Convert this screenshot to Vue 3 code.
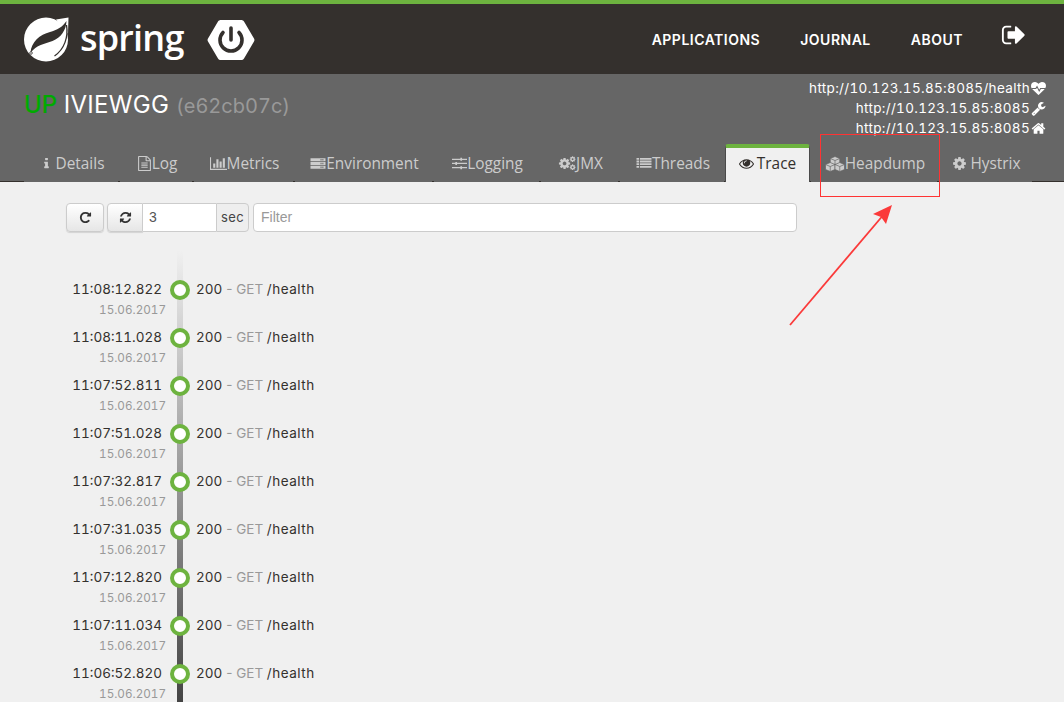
<script setup>
const icons = {
  info: { box: '0 0 1792 1792', d: 'M1216 1344v128q0 26-19 45t-45 19h-512q-26 0-45-19t-19-45v-128q0-26 19-45t45-19h64v-384h-64q-26 0-45-19t-19-45v-128q0-26 19-45t45-19h384q26 0 45 19t19 45v576h64q26 0 45 19t19 45zm-128-1152v192q0 26-19 45t-45 19h-256q-26 0-45-19t-19-45v-192q0-26 19-45t45-19h256q26 0 45 19t19 45z' },
  file: { box: '0 0 1792 1792', d: 'M1596 380q28 28 48 76t20 88v1152q0 40-28 68t-68 28h-1344q-40 0-68-28t-28-68v-1600q0-40 28-68t68-28h896q40 0 88 20t76 48zm-444-244v376h376q-10-29-22-41l-313-313q-12-12-41-22zm384 1528v-1024h-416q-40 0-68-28t-28-68v-416h-768v1536h1280zm-1024-864q0-14 9-23t23-9h704q14 0 23 9t9 23v64q0 14-9 23t-23 9h-704q-14 0-23-9t-9-23v-64zm736 224q14 0 23 9t9 23v64q0 14-9 23t-23 9h-704q-14 0-23-9t-9-23v-64q0-14 9-23t23-9h704zm0 256q14 0 23 9t9 23v64q0 14-9 23t-23 9h-704q-14 0-23-9t-9-23v-64q0-14 9-23t23-9h704z' },
  chart: { box: '0 0 2048 1792', d: 'M640 896v512h-256v-512h256zm384-512v1024h-256v-1024h256zm1024 1152v128h-2048v-1536h128v1408h1920zm-640-896v768h-256v-768h256zm384-384v1152h-256v-1152h256z' },
  server: { box: '0 0 1792 1792', d: 'M0 256h1792v368h-1792zM0 712h1792v368h-1792zM0 1168h1792v368h-1792zM1200 350v180h120v-180zM1420 350v180h120v-180zM1200 806v180h120v-180zM1420 806v180h120v-180zM1200 1262v180h120v-180zM1420 1262v180h120v-180z' },
  sliders: { box: '0 0 1792 1792', d: 'M0 320h1000v-110h200v110h592v150h-592v110h-200v-110h-1000zM0 820h400v-110h200v110h1192v150h-1192v110h-200v-110h-400zM0 1320h1000v-110h200v110h592v150h-592v110h-200v-110h-1000z' },
  list: { box: '0 0 1792 1792', d: 'M0 224h300v220h-300zM400 224h1392v220h-1392zM0 544h300v220h-300zM400 544h1392v220h-1392zM0 864h300v220h-300zM400 864h1392v220h-1392zM0 1184h300v220h-300zM400 1184h1392v220h-1392z' },
  eye: { box: '0 0 1792 1792', d: 'M1664 960q-152-236-381-353 61 104 61 225 0 185-131.5 316.5t-316.5 131.5-316.5-131.5-131.5-316.5q0-121 61-225-229 117-381 353 133 205 333.5 326.5t434.5 121.5 434.5-121.5 333.5-326.5zm-720-384q0-20-14-34t-34-14q-125 0-214.5 89.5t-89.5 214.5q0 20 14 34t34 14 34-14 14-34q0-86 61-147t147-61q20 0 34-14t14-34zm848 384q0 34-20 69-140 230-376.5 368.5t-499.5 138.5-499.5-139-376.5-368q-20-35-20-69t20-69q140-229 376.5-368t499.5-139 499.5 139 376.5 368q20 35 20 69z' },
  cog: { box: '0 0 1792 1792', d: 'M1152 896q0-106-75-181t-181-75-181 75-75 181 75 181 181 75 181-75 75-181zm512-109v222q0 12-8 23t-20 13l-185 28q-19 54-39 91 35 50 107 138 10 12 10 25t-9 23q-27 37-99 108t-94 71q-12 0-26-9l-138-108q-44 23-91 38-16 136-29 186-7 28-36 28h-222q-14 0-24.5-8.5t-11.5-21.5l-28-184q-49-16-90-37l-141 107q-10 9-25 9-14 0-25-11-126-114-165-168-7-10-7-23 0-12 8-23 15-21 51-66.5t54-70.5q-27-50-41-99l-183-27q-13-2-21-12.5t-8-23.5v-222q0-12 8-23t19-13l186-28q14-46 39-92-40-57-107-138-10-12-10-24 0-10 9-23 26-36 98.5-107.5t94.5-71.5q13 0 26 10l138 107q44-23 91-38 16-136 29-186 7-28 36-28h222q14 0 24.5 8.5t11.5 21.5l28 184q49 16 90 37l142-107q9-9 24-9 13 0 25 10 129 119 165 170 7 8 7 22 0 12-8 23-15 21-51 66.5t-54 70.5q26 50 41 98l183 28q13 2 21 12.5t8 23.5z' },
  refresh: { box: '0 0 1792 1792', d: 'M1639 1056q0 5-1 7-64 268-268 434.5t-478 166.5q-146 0-282.5-55t-243.5-157l-129 129q-19 19-45 19t-45-19-19-45v-448q0-26 19-45t45-19h448q26 0 45 19t19 45-19 45l-137 137q71 66 161 102t187 36q134 0 250-65t186-179q11-17 53-117 8-23 30-23h192q13 0 22.5 9.5t9.5 22.5zm25-800v448q0 26-19 45t-45 19h-448q-26 0-45-19t-19-45 19-45l138-138q-148-137-349-137-134 0-250 65t-186 179q-11 17-53 117-8 23-30 23h-199q-13 0-22.5-9.5t-9.5-22.5v-7q65-268 270-434.5t480-166.5q146 0 284 55.5t245 156.5l130-129q19-19 45-19t45 19 19 45z' },
  repeat: { box: '0 0 1792 1792', d: 'M1664 256v448q0 26-19 45t-45 19h-448q-42 0-59-40-17-39 14-69l138-138q-148-137-349-137-104 0-198.5 40.5t-163.5 109.5-109.5 163.5-40.5 198.5 40.5 198.5 109.5 163.5 163.5 109.5 198.5 40.5q119 0 225-52t179-147q7-10 23-12 15 0 25 9l137 138q9 8 9.5 20.5t-7.5 22.5q-109 132-264 204.5t-327 72.5q-156 0-298-61t-245-164-164-245-61-298 61-298 164-245 245-164 298-61q147 0 284.5 55.5t244.5 156.5l130-129q29-31 70-14 39 17 39 59z' },
  home: { box: '0 0 1792 1792', d: 'M1472 992v480q0 26-19 45t-45 19h-384v-384h-256v384h-384q-26 0-45-19t-19-45v-480q0-1 .5-3t.5-3l575-474 575 474q1 2 1 6zm223-69l-62 74q-8 9-21 11h-3q-13 0-21-7l-692-577-692 577q-12 8-24 7-13-2-21-11l-62-74q-8-10-7-23.5t11-21.5l719-599q32-26 76-26t76 26l244 204v-195q0-14 9-23t23-9h192q14 0 23 9t9 23v408l219 182q10 8 11 21.5t-7 23.5z' },
  wrench: { box: '0 0 1792 1792', d: 'M448 1472q0-26-19-45t-45-19-45 19-19 45 19 45 45 19 45-19 19-45zm644-420l-682 682q-37 37-90 37-52 0-91-37l-106-108q-38-36-38-90 0-53 38-91l681-681q39 98 114.5 173.5t173.5 114.5zm634-435q0 39-23 106-47 134-164.5 217.5t-258.5 83.5q-185 0-316.5-131.5t-131.5-316.5 131.5-316.5 316.5-131.5q58 0 121.5 16.5t107.5 46.5q16 11 16 28t-16 28l-293 169v224l193 107q5-3 79-48.5t135.5-81 70.5-35.5q15 0 23.5 10t8.5 25z' },
  signout: { box: '0 0 1792 1792', d: 'M704 1440q0 4 1 20t.5 26.5-3 23.5-10 19.5-20.5 6.5h-320q-119 0-203.5-84.5t-84.5-203.5v-704q0-119 84.5-203.5t203.5-84.5h320q13 0 22.5 9.5t9.5 22.5q0 4 1 20t.5 26.5-3 23.5-10 19.5-20.5 6.5h-320q-66 0-113 47t-47 113v704q0 66 47 113t113 47h312l11.5 1 11.5 3 8 5.5 7 9 2 13.5zm928-544q0 26-19 45l-544 544q-19 19-45 19t-45-19-19-45v-288h-448q-26 0-45-19t-19-45v-384q0-26 19-45t45-19h448v-288q0-26 19-45t45-19 45 19l544 544q19 19 19 45z' },
  heart: { box: '0 0 1792 1792', d: 'M896 1664q-26 0-44-18l-624-602q-10-8-27.5-26t-55.5-65.5-68-97.5-53.5-121-23.5-138q0-220 127-344t351-124q62 0 126.5 21.5t120 58 95.5 68.5 76 68q36-36 76-68t95.5-68.5 120-58 126.5-21.5q224 0 351 124t127 344q0 221-229 450l-623 600q-18 18-44 18z' },
}

const tabs = [
  { label: 'Details', icon: 'info', width: 94, spaced: true },
  { label: 'Log', icon: 'file', width: 72 },
  { label: 'Metrics', icon: 'chart', width: 99 },
  { label: 'Environment', icon: 'server', width: 137 },
  { label: 'Logging', icon: 'sliders', width: 105 },
  { label: 'JMX', icon: 'cogs', width: 77 },
  { label: 'Threads', icon: 'list', width: 104 },
  { label: 'Trace', icon: 'eye', width: 85, active: true, spaced: true },
  { label: 'Heapdump', icon: 'cubes', width: 126 },
  { label: 'Hystrix', icon: 'cog', width: 93, spaced: true },
]

const urls = [
  { text: 'http://10.123.15.85:8085/health', icon: 'heart' },
  { text: 'http://10.123.15.85:8085', icon: 'wrench' },
  { text: 'http://10.123.15.85:8085', icon: 'home' },
]

const traces = [
  '11:08:12.822',
  '11:08:11.028',
  '11:07:52.811',
  '11:07:51.028',
  '11:07:32.817',
  '11:07:31.035',
  '11:07:12.820',
  '11:07:11.034',
  '11:06:52.820',
]
</script>

<template>
  <div class="page">
    <nav class="navbar">
      <div class="brand">
        <svg class="leaf" viewBox="24 17 47 45">
          <circle cx="46" cy="39.500" r="22" fill="#fff" />
          <path fill="#fff" d="M56 19.500L68.500 17.500 68 34z" />
          <path fill="#34302d" d="M30.500 53C31 42 40 34.500 50 32c7-1.800 12.500-5 16.500-11 -.5 9.500-5.500 16.500-14 20-8 3.200-16 3.500-22 12z" />
          <path fill="none" stroke="#34302d" stroke-width="1.300" d="M66.500 25c2 12-2 24-12 31" />
          <circle cx="31" cy="53" r="1.300" fill="#fff" stroke="#34302d" stroke-width="0.800" />
        </svg>
        <span class="wordmark">spring</span>
        <svg class="hex" viewBox="0 0 48 42">
          <path fill="#fff" d="M11 2.500c.7-1 1.600-1.500 3-1.500h20c1.400 0 2.300.5 3 1.500l10 17c.6 1 .6 2 0 3l-10 17c-.7 1-1.600 1.500-3 1.500h-20c-1.400 0-2.300-.5-3-1.500l-10-17c-.6-1-.6-2 0-3z" />
          <path fill="none" stroke="#34302d" stroke-width="3.600" stroke-linecap="round" d="M16 13.500a11 11 0 1 0 16 0" />
          <path fill="none" stroke="#34302d" stroke-width="3.600" stroke-linecap="round" d="M24 9v12" />
        </svg>
      </div>
      <ul class="nav-links">
        <li>APPLICATIONS</li>
        <li>JOURNAL</li>
        <li>ABOUT</li>
        <li class="signout">
          <svg viewBox="0 0 1792 1792"><path fill="#fff" :d="icons.signout.d" /></svg>
        </li>
      </ul>
    </nav>

    <header class="app-header">
      <div class="summary">
        <h1 class="title"><span class="status">UP</span> IVIEWGG <small>(e62cb07c)</small></h1>
        <ul class="urls">
          <li v-for="url in urls" :key="url.icon">
            <span>{{ url.text }}</span>
            <span class="url-icon">
              <svg :viewBox="icons[url.icon].box"><path fill="#fff" :d="icons[url.icon].d" /></svg>
              <svg v-if="url.icon === 'heart'" class="pulse" viewBox="0 0 1792 1792">
                <path fill="none" stroke="#666" stroke-width="130" d="M60 900h520l140-240 260 520 160-280h620" />
              </svg>
            </span>
          </li>
        </ul>
      </div>
      <ul class="tabs">
        <li
          v-for="tab in tabs"
          :key="tab.label"
          class="tab"
          :class="{ active: tab.active, spaced: tab.spaced }"
          :style="{ width: tab.width + 'px' }"
        >
          <svg v-if="tab.icon === 'cogs'" class="tab-icon cogs" viewBox="0 0 1920 1536">
            <g fill="currentColor">
              <path :d="icons.cog.d" transform="translate(0 101) scale(.78)" />
              <path :d="icons.cog.d" transform="translate(1202 -18) scale(.4)" />
              <path :d="icons.cog.d" transform="translate(1202 842) scale(.4)" />
            </g>
          </svg>
          <svg v-else-if="tab.icon === 'cubes'" class="tab-icon cubes" viewBox="0 0 40 32">
            <g fill="currentColor" stroke="#666" stroke-width="1.400" stroke-linejoin="round">
              <path d="M20 1l9.500 4v9.500l-9.500 4-9.500-4V5z" />
              <path d="M10.500 13l9.500 4v10l-9.500 4L1 27V17z" />
              <path d="M29.500 13l9.500 4v10l-9.500 4-9.500-4V17z" />
              <path fill="none" d="M10.500 5l9.500 4 9.500-4M20 9v9M1 17l9.500 4 9.500-4M10.500 21v10M20 17l9.500 4 9.500-4M29.500 21v10" />
            </g>
          </svg>
          <svg v-else class="tab-icon" :class="tab.icon" :viewBox="icons[tab.icon].box">
            <path fill="currentColor" :d="icons[tab.icon].d" />
          </svg>
          <span>{{ tab.label }}</span>
        </li>
      </ul>
    </header>

    <main class="content">
      <div class="toolbar">
        <button class="btn single">
          <svg viewBox="0 0 1792 1792"><path fill="#333" :d="icons.repeat.d" /></svg>
        </button>
        <div class="interval">
          <button class="btn joined">
            <svg viewBox="0 0 1792 1792"><path fill="#333" :d="icons.refresh.d" /></svg>
          </button>
          <input class="seconds" type="text" value="3" />
          <span class="addon">sec</span>
        </div>
        <input class="filter" type="text" placeholder="Filter" />
      </div>

      <ol class="timeline">
        <li v-for="time in traces" :key="time" class="trace">
          <div class="when">
            <div class="time">{{ time }}</div>
            <div class="date">15.06.2017</div>
          </div>
          <span class="dot"></span>
          <div class="what">200 <span class="muted">- GET</span> <span class="path">/health</span></div>
        </li>
      </ol>
    </main>

    <div class="mark-box"></div>
    <svg class="mark-arrow" viewBox="0 0 120 130">
      <path d="M2 128L97 16" stroke="#fb3a3a" stroke-width="1.800" fill="none" />
      <path d="M104 8L98 27 93 20 85 17z" fill="#fb3a3a" />
    </svg>
  </div>
</template>

<style>
html,
body {
  margin: 0;
  height: 100%;
  overflow: hidden;
  background: #f0f0f0;
}
</style>

<style scoped>
.page {
  position: relative;
  height: 702px;
  overflow: hidden;
  background: #f0f0f0;
  font-family: Inter, "Open Sans", sans-serif;
  font-variant-numeric: tabular-nums;
  color: #34302d;
}

ul,
ol {
  list-style: none;
  margin: 0;
  padding: 0;
}

.navbar {
  box-sizing: border-box;
  height: 74px;
  border-top: 4px solid #6db33f;
  background: #34302d;
  display: flex;
  justify-content: space-between;
  padding-left: 24px;
}

.brand {
  display: flex;
  align-items: center;
}

.leaf {
  width: 47px;
  height: 45px;
  margin-right: 9px;
  margin-top: 1px;
}

.wordmark {
  font-family: "Open Sans", sans-serif;
  font-size: 36px;
  font-weight: 600;
  line-height: 40px;
  color: #fff;
  width: 127px;
  margin-top: -3px;
  letter-spacing: -0.8px;
}

.hex {
  width: 48px;
  height: 42px;
  margin-top: 1px;
}

.nav-links {
  display: flex;
  align-items: center;
  color: #fff;
  font-size: 14px;
  font-weight: 600;
  letter-spacing: 0.5px;
  margin-right: 37px;
  gap: 40px;
}

.signout {
  display: flex;
  margin-top: -8px;
  margin-left: -2px;
}

.signout svg {
  width: 26px;
  height: 26px;
}

.app-header {
  height: 108px;
  background: #666;
  display: flex;
  flex-direction: column;
  justify-content: space-between;
}

.summary {
  display: flex;
  justify-content: space-between;
  padding: 4px 17px 0 24px;
}

.title {
  margin: 14px 0 0;
  font-size: 24px;
  line-height: 26px;
  font-weight: 400;
  color: #fff;
  letter-spacing: 0.3px;
}

.status {
  color: #00aa00;
  font-weight: 500;
  letter-spacing: -0.1px;
}

.title small {
  font-size: 20px;
  letter-spacing: 0;
  color: #999;
}

.urls {
  color: #fff;
  font-size: 13.5px;
  letter-spacing: 0.33px;
}

.urls li {
  display: flex;
  justify-content: flex-end;
  align-items: center;
  height: 20px;
}

.url-icon {
  position: relative;
  width: 17px;
  height: 15px;
  display: flex;
}

.url-icon svg {
  width: 15px;
  height: 15px;
  margin-left: 1px;
}

.pulse {
  position: absolute;
  left: 0;
  top: 0;
}

.tabs {
  display: flex;
  padding-left: 24px;
  height: 37px;
  border-bottom: 1px solid #34302d;
}

.tab {
  box-sizing: border-box;
  height: 38px;
  margin-right: 2px;
  padding: 0 0 3px 2px;
  background: #666;
  color: #ccc;
  font-family: "Open Sans", sans-serif;
  font-size: 15.4px;
  display: flex;
  align-items: center;
  justify-content: center;
  border-top: 4px solid transparent;
  flex: none;
}

.tab.active {
  background: #f0f0f0;
  color: #34302d;
  border-top-color: #6db33f;
  border-left: 1px solid #4a4a4a;
  border-right: 1px solid #4a4a4a;
  border-radius: 3px 3px 0 0;
  margin-right: 1px;
  margin-left: -1px;
  padding-left: 0;
}

.tab-icon {
  width: 15px;
  height: 15px;
  flex: none;
}

.tab-icon.chart {
  width: 17px;
}

.tab-icon.server,
.tab-icon.list {
  width: 16px;
  height: 15px;
}

.tab-icon.cogs {
  width: 18px;
  height: 14.400px;
}

.tab-icon.cubes {
  width: 20px;
  height: 16px;
}

.tab.spaced .tab-icon {
  margin-right: 3px;
}

.tab .tab-icon.info {
  width: 13px;
  margin-right: 3px;
}

.content {
  padding: 21px 0 0 66px;
}

.toolbar {
  display: flex;
  width: 731px;
  height: 29px;
}

.btn {
  box-sizing: border-box;
  height: 29px;
  padding: 0;
  border: 1px solid #ccc;
  background: linear-gradient(#fff, #e6e6e6);
  display: flex;
  align-items: center;
  justify-content: center;
}

.btn svg {
  width: 13px;
  height: 13px;
}

.single {
  width: 38px;
  border-radius: 4px;
  margin-right: 3px;
  box-shadow: 0 1px 1px rgba(0, 0, 0, 0.12);
}

.interval {
  display: flex;
  margin-right: 4px;
}

.joined {
  width: 36px;
  border-radius: 4px 0 0 4px;
  box-shadow: 0 1px 1px rgba(0, 0, 0, 0.12);
}

input {
  box-sizing: border-box;
  height: 29px;
  margin: 0;
  padding: 0 0 2px;
  border: 1px solid #ccc;
  background: #fff;
  color: #555;
  font-family: "Liberation Sans", sans-serif;
  font-size: 14px;
  outline: none;
}

input::placeholder {
  color: #999;
  opacity: 1;
}

.seconds {
  width: 73px;
  padding-left: 6px;
  border-left: 0;
  border-right: 0;
}

.addon {
  box-sizing: border-box;
  width: 33px;
  height: 29px;
  border: 1px solid #ccc;
  border-radius: 0 4px 4px 0;
  background: #eee;
  color: #444;
  font-size: 13px;
  letter-spacing: 0.3px;
  padding-bottom: 1px;
  display: flex;
  align-items: center;
  justify-content: center;
}

.filter {
  flex: 1;
  min-width: 0;
  padding-left: 7px;
  border-radius: 4px;
}

.timeline {
  position: relative;
  margin-top: 18px;
  padding-top: 29px;
}

.timeline::before {
  content: "";
  position: absolute;
  left: 111px;
  top: 0;
  bottom: 0;
  width: 6px;
  background: linear-gradient(rgba(68, 68, 68, 0), #444 98%);
}

.trace {
  position: relative;
  display: flex;
  height: 48px;
  align-items: flex-start;
}

.when {
  width: 100px;
  text-align: right;
}

.time {
  height: 20px;
  line-height: 20px;
  font-size: 13.5px;
  padding-right: 4px;
}

.date {
  height: 20px;
  line-height: 22px;
  font-size: 11.700px;
  color: #999;
}

.dot {
  box-sizing: border-box;
  width: 20px;
  height: 20px;
  margin: 1px 6px 0 4px;
  border: 4px solid #6db33f;
  border-radius: 50%;
  background: #fff;
  flex: none;
}

.what {
  line-height: 20px;
  font-size: 13.5px;
  word-spacing: -1px;
}

.path {
  margin-left: 1px;
  letter-spacing: 0.5px;
}

.muted {
  color: #999;
}

.mark-box {
  position: absolute;
  left: 820px;
  top: 134px;
  width: 120px;
  height: 63px;
  box-sizing: border-box;
  border: 1px solid #f33;
}

.mark-arrow {
  position: absolute;
  left: 788px;
  top: 197px;
  width: 120px;
  height: 130px;
}
</style>
